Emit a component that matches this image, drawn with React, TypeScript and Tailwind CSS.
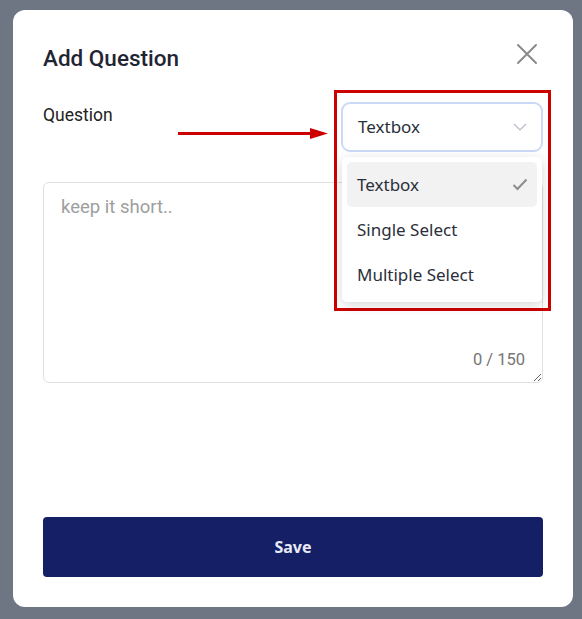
import React, { useState } from 'react';

const TYPES = ['Textbox', 'Single Select', 'Multiple Select'];

const CloseIcon = () => (
  <svg width="24" height="24" viewBox="0 0 24 24" fill="none">
    <path d="M3 3L21 21M21 3L3 21" stroke="#8a8a8a" strokeWidth="2" strokeLinecap="round" />
  </svg>
);

const Chevron = () => (
  <svg width="14" height="8" viewBox="0 0 14 8" fill="none">
    <path d="M1 1L7 7L13 1" stroke="#b8bcc4" strokeWidth="1.2" />
  </svg>
);

const Check = () => (
  <svg width="16" height="13" viewBox="0 0 16 13" fill="none">
    <path d="M1.5 7L5.5 11L14.5 1.5" stroke="#8c8c8c" strokeWidth="2" />
  </svg>
);

export default function App() {
  const [type, setType] = useState('Textbox');
  const [text, setText] = useState('');

  return (
    <div className="w-[582px] h-[619px] bg-[#6f7683] pt-[10px] pl-[13px]" style={{ fontFamily: 'Roboto, sans-serif' }}>
      <div className="relative w-[560px] h-[597px] bg-white rounded-[12px] px-[30px] pt-[34px] pb-[30px] flex flex-col">
        {/* header */}
        <div className="flex items-start justify-between h-[28px]">
          <h2 className="text-[22.5px] leading-[28px] font-medium text-[#1f2533]">Add Question</h2>
          <button className="-mt-[2px] mr-[4px]">
            <CloseIcon />
          </button>
        </div>

        {/* question type */}
        <div className="mt-[30px] flex justify-between items-start">
          <span className="mt-[1px] text-[17.5px] leading-[24px] text-[#222]">Question</span>
          <div className="relative">
            <div
              className="w-[202px] h-[50px] rounded-[9px] border-2 border-[#cbd9f7] flex items-center justify-between pl-[15px] pr-[14px] text-[17px] text-[#2b2f3a]"
              style={{ fontFamily: '"Noto Sans", sans-serif' }}
            >
              <span>{type}</span>
              <Chevron />
            </div>
            <div
              className="absolute z-10 left-[1px] top-[55px] w-[200px] bg-white rounded-[5px] p-[5px] shadow-[0_3px_12px_rgba(0,0,0,0.16)]"
              style={{ fontFamily: '"Noto Sans", sans-serif' }}
            >
              {TYPES.map((t) => (
                <div
                  key={t}
                  onClick={() => setType(t)}
                  className={`h-[45px] flex items-center justify-between pl-[10px] pr-[9px] rounded-[5px] text-[17px] text-[#2b2f3a] ${
                    t === type ? 'bg-[#f2f2f2]' : ''
                  }`}
                >
                  <span>{t}</span>
                  {t === type && <Check />}
                </div>
              ))}
            </div>
          </div>
        </div>

        {/* text area */}
        <div className="relative mt-[30px]">
          <textarea
            value={text}
            maxLength={150}
            onChange={(e) => setText(e.target.value)}
            placeholder="keep it short.."
            className="block w-full h-[201px] border border-[#e0e0e0] rounded-[6px] pl-[17px] pt-[11px] text-[18.5px] leading-[27px] text-[#222] placeholder:text-[#9e9e9e] outline-none"
          />
          <span className="absolute right-[18px] bottom-[12px] text-[16.5px] leading-[22px] text-[#757575]">
            {text.length} / 150
          </span>
        </div>

        <div className="flex-1" />

        <button
          className="h-[60px] w-full rounded-[4px] bg-[#141f66] text-[#e8eaf6] text-[16px] font-bold"
          style={{ fontFamily: '"Noto Sans", sans-serif' }}
        >
          Save
        </button>

        {/* callout */}
        <div className="absolute left-[321px] top-[80px] w-[217px] h-[221px] border-[3px] border-[#cc0000] pointer-events-none" />
        <svg className="absolute left-[165px] top-[118px]" width="150" height="11" viewBox="0 0 150 11">
          <rect x="0" y="4" width="136" height="3" fill="#cc0000" />
          <path d="M132 0L150 5.5L132 11Z" fill="#cc0000" />
        </svg>
      </div>
    </div>
  );
}
